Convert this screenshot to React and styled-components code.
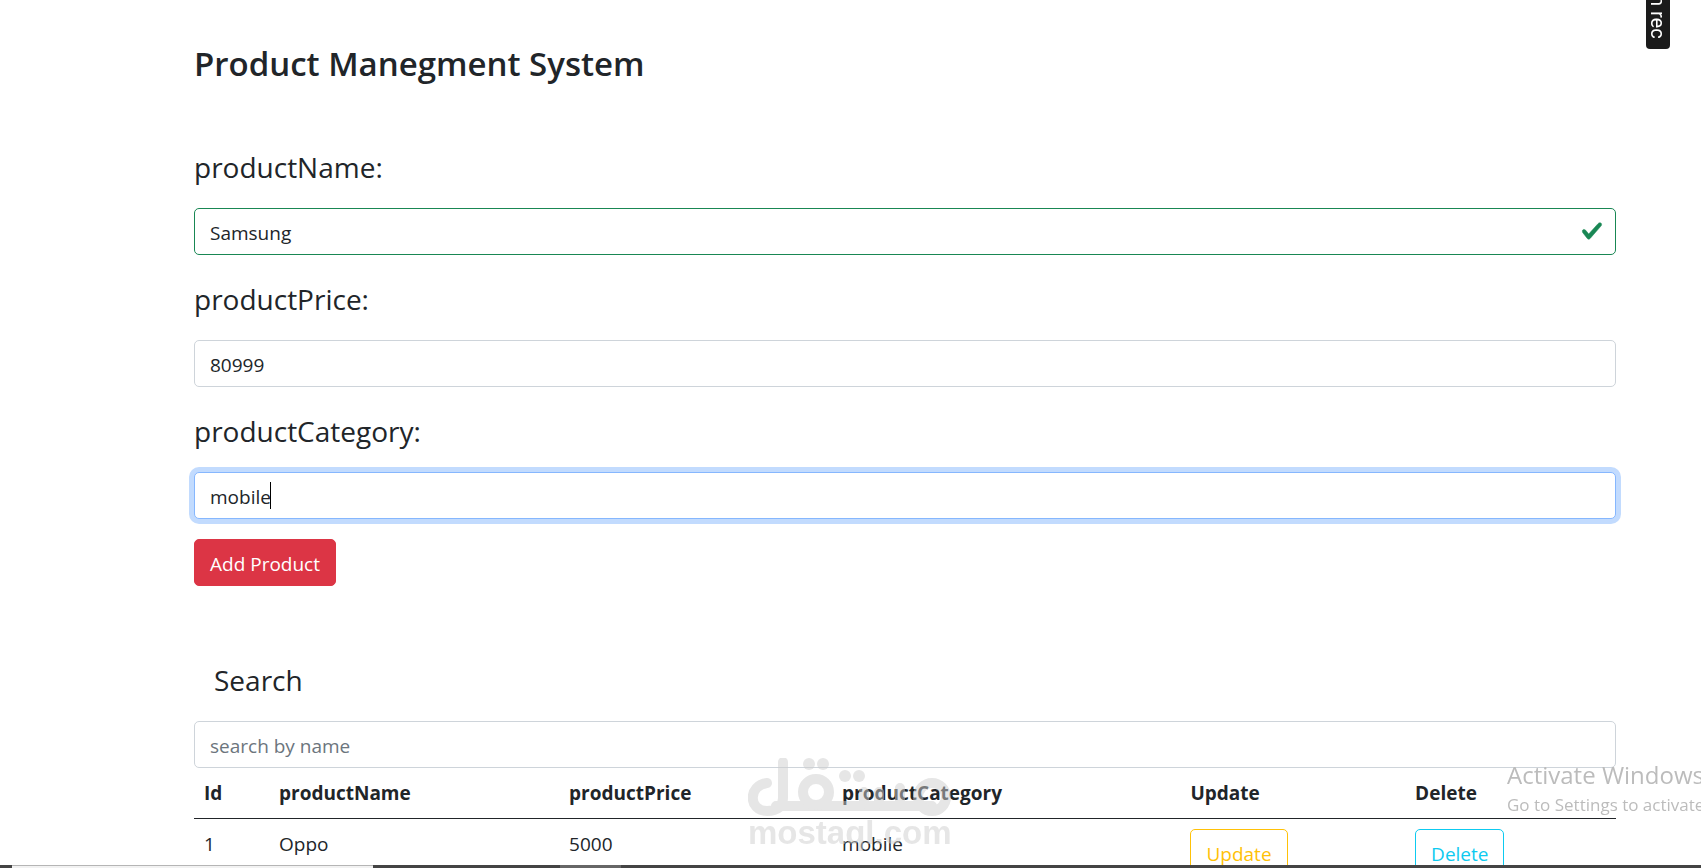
import React, { useState } from 'react';
import styled, { createGlobalStyle, css } from 'styled-components';

const COLORS = {
  text: '#212529',
  muted: '#6c757d',
  border: '#ced4da',
  success: '#198754',
  danger: '#dc3545',
  warning: '#ffc107',
  info: '#0dcaf0',
  focus: '#86b7fe',
  ring: '#c2dbfe'
};

const GlobalStyle = createGlobalStyle`
  * {
    box-sizing: border-box;
  }
  body {
    margin: 0;
    height: 100vh;
    overflow: hidden;
    background: #fff;
    color: ${COLORS.text};
    font-family: 'Segoe UI', 'Open Sans', 'Noto Sans', sans-serif;
    font-size: 19px;
    line-height: 30px;
  }
`;

const Page = styled.main`
  padding: 40px 5% 0 194px;
`;

const Title = styled.h1`
  margin: 0 0 55px;
  font-size: 33px;
  font-weight: 600;
  line-height: 48px;
`;

const Field = styled.div`
  position: relative;
  margin-bottom: 20px;
`;

const Label = styled.label`
  display: block;
  padding: 0 ${props => (props.$indent ? '20px' : '0')};
  margin-bottom: 17px;
  font-size: 28px;
  line-height: 48px;
`;

const TextBox = styled.input`
  display: block;
  width: 100%;
  height: 47px;
  padding: 2px 15px 0;
  border: 1px solid ${COLORS.border};
  border-radius: 5px;
  background: #fff;
  color: ${COLORS.text};
  font: inherit;
  outline: 0;
  &::placeholder {
    color: ${COLORS.muted};
    opacity: 1;
  }
  ${props => props.$valid && css`
    border-color: ${COLORS.success};
  `}
  ${props => props.$active && css`
    border-color: ${COLORS.focus};
    box-shadow: 0 0 0 5px ${COLORS.ring};
    caret-color: transparent;
  `}
`;

const Caret = styled.span`
  position: absolute;
  left: 76px;
  bottom: 10px;
  width: 1px;
  height: 27px;
  background: #000;
`;

const ValidMark = styled.svg`
  position: absolute;
  right: 13px;
  bottom: 13px;
  width: 22px;
  height: 22px;
`;

const Button = styled.button`
  height: 47px;
  padding: 2px 15px 0;
  border: 1px solid ${props => COLORS[props.$color]};
  border-radius: 5px;
  background: ${props => (props.$outline ? 'transparent' : COLORS[props.$color])};
  color: ${props => (props.$outline ? COLORS[props.$color] : '#fff')};
  font: inherit;
  cursor: pointer;
`;

const SearchArea = styled.section`
  margin-top: 70px;
`;

const Table = styled.table`
  width: 100%;
  table-layout: fixed;
  border-collapse: separate;
  border-spacing: 0;
  text-align: left;
`;

const Col = styled.col`
  width: ${props => props.$width};
`;

const HeadCell = styled.th`
  height: 51px;
  padding: 10px;
  border-bottom: 1px solid ${COLORS.text};
  font-weight: 700;
`;

const Cell = styled.td`
  padding: 10px;
  vertical-align: top;
`;

const SideTab = styled.div`
  position: fixed;
  top: 0;
  right: 31px;
  width: 24px;
  height: 49px;
  display: flex;
  justify-content: flex-end;
  padding-bottom: 10px;
  border-radius: 0 0 4px 4px;
  background: #1b1b1b;
  color: #fff;
  font-family: Roboto, sans-serif;
  font-size: 20px;
  line-height: 24px;
  writing-mode: vertical-rl;
  white-space: nowrap;
  overflow: hidden;
`;

const Watermark = styled.div`
  position: fixed;
  left: 748px;
  bottom: 19px;
  width: 204px;
  opacity: 0.5;
  color: #cdcdcd;
  font: bold 33px/33px 'Liberation Sans', Arial, sans-serif;
  pointer-events: none;
  svg {
    display: block;
  }
`;

const Activation = styled.div`
  position: fixed;
  left: 1507px;
  bottom: 49px;
  color: #bcbcbc;
  white-space: nowrap;
  font-size: 17px;
  line-height: 28px;
  pointer-events: none;
`;

const ActivationTitle = styled.div`
  font-size: 24px;
  line-height: 32px;
`;

const Taskbar = styled.div`
  position: fixed;
  left: 0;
  right: 0;
  bottom: 0;
  height: 3px;
  display: flex;
  background: #444;
`;

const TaskbarSearch = styled.div`
  width: 361px;
  margin: 0 187px 0 12px;
  border-top: 1px solid #b5b5b5;
  background: #f2f2f2;
`;

const TaskbarItem = styled.div`
  width: 61px;
  background: #666;
`;

const COLUMNS = [
  { title: 'Id', width: '75px' },
  { title: 'productName', width: '20.4%' },
  { title: 'productPrice', width: '19.2%' },
  { title: 'productCategory', width: '24.5%' },
  { title: 'Update', width: '15.8%' },
  { title: 'Delete', width: 'auto' }
];

const PRODUCTS = [{ id: 1, name: 'Oppo', price: 5000, category: 'mobile' }];

const App = () => {
  const [form, setForm] = useState({ name: 'Samsung', price: '80999', category: 'mobile' });
  const [search, setSearch] = useState('');
  const change = e => setForm({ ...form, [e.target.name]: e.target.value });
  const rows = PRODUCTS.filter(p => p.name.toLowerCase().includes(search.toLowerCase()));

  return (
    <>
      <GlobalStyle />
      <Page>
        <Title>Product Manegment System</Title>
        <Field>
          <Label htmlFor="name">productName:</Label>
          <TextBox id="name" name="name" value={form.name} onChange={change} $valid />
          <ValidMark viewBox="0 0 8 8" aria-hidden="true">
            <path
              fill={COLORS.success}
              stroke={COLORS.success}
              strokeWidth="0.2"
              d="M2.3 6.73L.6 4.53c-.4-1.04.46-1.4 1.1-.8l1.1 1.4 3.4-3.8c.6-.63 1.6-.27 1.2.7l-4 4.6c-.43.5-.8.4-1.1.1z"
            />
          </ValidMark>
        </Field>
        <Field>
          <Label htmlFor="price">productPrice:</Label>
          <TextBox id="price" name="price" value={form.price} onChange={change} />
        </Field>
        <Field>
          <Label htmlFor="category">productCategory:</Label>
          <TextBox
            id="category"
            name="category"
            value={form.category}
            onChange={change}
            $active
          />
          <Caret />
        </Field>
        <Button type="button" $color="danger">Add Product</Button>

        <SearchArea>
          <Label htmlFor="search" $indent>Search</Label>
          <TextBox
            id="search"
            placeholder="search by name"
            value={search}
            onChange={e => setSearch(e.target.value)}
          />
          <Table>
            <colgroup>
              {COLUMNS.map(c => <Col key={c.title} $width={c.width} />)}
            </colgroup>
            <thead>
              <tr>
                {COLUMNS.map(c => <HeadCell key={c.title} scope="col">{c.title}</HeadCell>)}
              </tr>
            </thead>
            <tbody>
              {rows.map(p => (
                <tr key={p.id}>
                  <Cell>{p.id}</Cell>
                  <Cell>{p.name}</Cell>
                  <Cell>{p.price}</Cell>
                  <Cell>{p.category}</Cell>
                  <Cell><Button type="button" $color="warning" $outline>Update</Button></Cell>
                  <Cell><Button type="button" $color="info" $outline>Delete</Button></Cell>
                </tr>
              ))}
            </tbody>
          </Table>
        </SearchArea>
      </Page>

      <SideTab>n rec</SideTab>
      <Watermark>
        <svg width="204" height="58" viewBox="0 0 204 58" fill="none" aria-hidden="true">
          <g stroke="currentColor" strokeWidth="10" strokeLinecap="round" strokeLinejoin="round">
            <path d="M19 25C0 27 0 53 19 53C30 53 35 48 35 40V4M28 48H184" />
            <circle cx="68" cy="34" r="13" />
            <path d="M116 34V46M131 34V46M152 30V46" />
            <circle cx="184" cy="39" r="14" />
          </g>
          <g fill="currentColor">
            <circle cx="61" cy="6" r="6" />
            <circle cx="75" cy="6" r="6" />
            <circle cx="97" cy="18" r="6" />
            <circle cx="111" cy="18" r="6" />
          </g>
        </svg>
        mostaql.com
      </Watermark>
      <Activation>
        <ActivationTitle>Activate Windows</ActivationTitle>
        Go to Settings to activate Windows.
      </Activation>
      <Taskbar>
        <TaskbarSearch />
        <TaskbarItem />
      </Taskbar>
    </>
  );
};

export default App;
